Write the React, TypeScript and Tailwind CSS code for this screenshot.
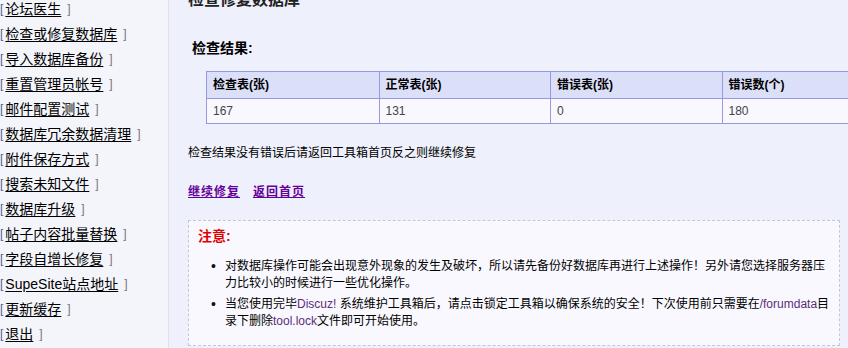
import React from "react";

const menu = [
  "论坛医生",
  "检查或修复数据库",
  "导入数据库备份",
  "重置管理员帐号",
  "邮件配置测试",
  "数据库冗余数据清理",
  "附件保存方式",
  "搜索未知文件",
  "数据库升级",
  "帖子内容批量替换",
  "字段自增长修复",
  "SupeSite站点地址",
  "更新缓存",
  "退出",
];

const font = { fontFamily: '"Liberation Sans", "Noto Sans CJK SC", sans-serif' };

export default function App() {
  return (
    <div
      className="flex h-[348px] w-[848px] overflow-hidden bg-[#eef0fb] text-black"
      style={font}
    >
      <div className="w-[169px] shrink-0 border-r border-[#dde0ee] bg-[#f4f5fb]">
        <div className="mt-[-4px] flex flex-col">
          {menu.map((m) => (
            <div key={m} className="flex h-[25px] items-center whitespace-nowrap">
              <span className="text-[12px] text-[#4a5f92]">[</span>
              <span className="ml-[2px] text-[14px] leading-[18px] underline underline-offset-2">
                {m}
              </span>
              <span className="ml-[6px] text-[12px] text-[#777]">]</span>
            </div>
          ))}
        </div>
      </div>
      <div className="flex min-w-0 flex-1 flex-col pl-[19px]">
        <div className="mt-[-10px] h-5 whitespace-nowrap text-[16px] font-bold leading-5 text-[#222]">
          检查修复数据库
        </div>
        <div className="ml-[4px] mt-[28px] h-5 text-[14px] font-bold leading-5">
          检查结果:
        </div>
        <div className="ml-[18px] mt-[13px] w-[688px] shrink-0">
          <div className="grid grid-cols-4 border border-[#9599dd] text-[12px]">
            {["检查表(张)", "正常表(张)", "错误表(张)", "错误数(个)"].map((h, i) => (
              <div
                key={h}
                className={`flex h-[26px] items-center bg-[#dcdff8] pl-[6px] font-bold ${
                  i > 0 ? "border-l border-[#9599dd]" : ""
                }`}
              >
                {h}
              </div>
            ))}
            {["167", "131", "0", "180"].map((v, i) => (
              <div
                key={i}
                className={`flex h-[25px] items-center border-t border-[#9599dd] bg-[#f8f8fe] pl-[6px] text-[#444] ${
                  i > 0 ? "border-l border-[#9599dd]" : ""
                }`}
              >
                {v}
              </div>
            ))}
          </div>
        </div>
        <div className="mt-[20px] h-[18px] whitespace-nowrap text-[12px] leading-[18px]">
          检查结果没有错误后请返回工具箱首页反之则继续修复
        </div>
        <div className="mt-[21px] flex h-[18px] gap-[13px] text-[12px] font-bold leading-[18px] text-[#660099]">
          <a href="#" className="underline tracking-[1px]">继续修复</a>
          <a href="#" className="underline tracking-[1px]">返回首页</a>
        </div>
        <div className="mt-[19px] h-[126px] w-[652px] shrink-0 border border-dashed border-[#c4c7da] bg-[#f8f8fe] pl-[9px] pt-[5px]">
          <div className="h-5 text-[14px] font-bold leading-5 text-[#e00000]">注意:</div>
          <ul className="mt-[12px] flex flex-col gap-[4px] text-[12px] leading-[17px]">
            <li className="flex whitespace-nowrap">
              <span className="w-[27px] shrink-0 pl-[13px] text-[14px] leading-[17px] text-[#111]">•</span>
              <span>
                对数据库操作可能会出现意外现象的发生及破坏，所以请先备份好数据库再进行上述操作！另外请您选择服务器压
                <br />
                力比较小的时候进行一些优化操作。
              </span>
            </li>
            <li className="flex whitespace-nowrap">
              <span className="w-[27px] shrink-0 pl-[13px] text-[14px] leading-[17px] text-[#111]">•</span>
              <span>
                当您使用完毕<span className="text-[#5b2d7a]">Discuz!</span> 系统维护工具箱后，请点击锁定工具箱以确保系统的安全！下次使用前只需要在
                <span className="text-[#5b2d7a]">/forumdata</span>目
                <br />
                录下删除<span className="text-[#5b2d7a]">tool.lock</span>文件即可开始使用。
              </span>
            </li>
          </ul>
        </div>
      </div>
    </div>
  );
}
